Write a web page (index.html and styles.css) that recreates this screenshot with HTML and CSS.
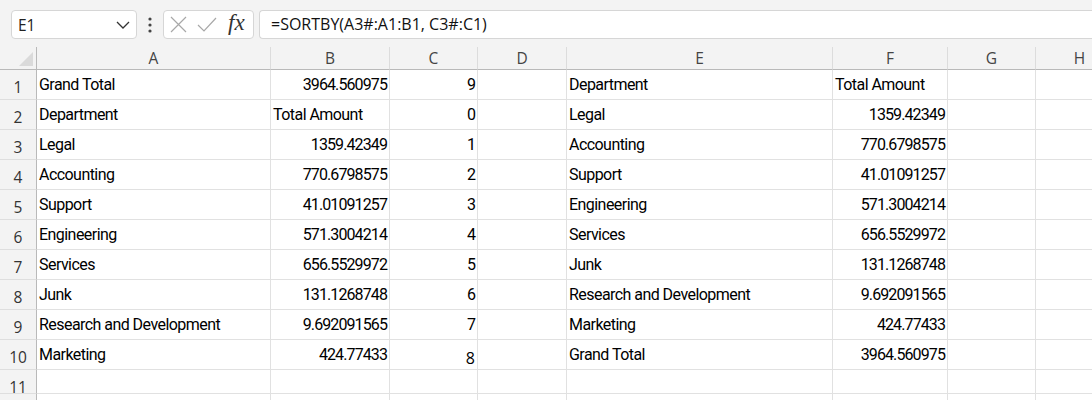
FILE: index.html
```html
<!DOCTYPE html>
<html lang="en">
<head>
<meta charset="UTF-8">
<meta name="viewport" content="width=device-width, initial-scale=1.0">
<title>Sheet1</title>
<link rel="stylesheet" href="styles.css">
</head>
<body>
<div class="toolbar">
    <div class="name-box">
        <span>E1</span>
        <svg class="chevron" width="14" height="8" viewBox="0 0 14 8"><path d="M1 1 L7 7 L13 1" fill="none" stroke="#333" stroke-width="1.3"/></svg>
    </div>
    <svg class="grip" width="4" height="16" viewBox="0 0 4 16">
        <circle cx="2" cy="2" r="1.6" fill="#444"/>
        <circle cx="2" cy="8" r="1.6" fill="#444"/>
        <circle cx="2" cy="14" r="1.6" fill="#444"/>
    </svg>
    <div class="fx-box">
        <svg class="cancel" width="17" height="17" viewBox="0 0 17 17"><path d="M1 1 L16 16 M16 1 L1 16" stroke="#a8a8a8" stroke-width="1.2"/></svg>
        <svg class="enter" width="20" height="15" viewBox="0 0 20 15"><path d="M1 8 L7 14 L19 1" fill="none" stroke="#a8a8a8" stroke-width="1.2"/></svg>
        <span class="fx">fx</span>
    </div>
    <div class="formula-box">=SORTBY(A3#:A1:B1, C3#:C1)</div>
</div>

<div class="sheet">
    <div class="corner"><span class="select-all"></span></div>
    <div class="col-head">A</div>
    <div class="col-head">B</div>
    <div class="col-head">C</div>
    <div class="col-head">D</div>
    <div class="col-head">E</div>
    <div class="col-head">F</div>
    <div class="col-head">G</div>
    <div class="col-head">H</div>

    <div class="row-head">1</div>
    <div class="cell">Grand Total</div>
    <div class="cell num">3964.560975</div>
    <div class="cell num">9</div>
    <div class="cell"></div>
    <div class="cell">Department</div>
    <div class="cell">Total Amount</div>
    <div class="cell"></div>
    <div class="cell"></div>

    <div class="row-head">2</div>
    <div class="cell">Department</div>
    <div class="cell">Total Amount</div>
    <div class="cell num">0</div>
    <div class="cell"></div>
    <div class="cell">Legal</div>
    <div class="cell num">1359.42349</div>
    <div class="cell"></div>
    <div class="cell"></div>

    <div class="row-head">3</div>
    <div class="cell">Legal</div>
    <div class="cell num">1359.42349</div>
    <div class="cell num">1</div>
    <div class="cell"></div>
    <div class="cell">Accounting</div>
    <div class="cell num">770.6798575</div>
    <div class="cell"></div>
    <div class="cell"></div>

    <div class="row-head">4</div>
    <div class="cell">Accounting</div>
    <div class="cell num">770.6798575</div>
    <div class="cell num">2</div>
    <div class="cell"></div>
    <div class="cell">Support</div>
    <div class="cell num">41.01091257</div>
    <div class="cell"></div>
    <div class="cell"></div>

    <div class="row-head">5</div>
    <div class="cell">Support</div>
    <div class="cell num">41.01091257</div>
    <div class="cell num">3</div>
    <div class="cell"></div>
    <div class="cell">Engineering</div>
    <div class="cell num">571.3004214</div>
    <div class="cell"></div>
    <div class="cell"></div>

    <div class="row-head">6</div>
    <div class="cell">Engineering</div>
    <div class="cell num">571.3004214</div>
    <div class="cell num">4</div>
    <div class="cell"></div>
    <div class="cell">Services</div>
    <div class="cell num">656.5529972</div>
    <div class="cell"></div>
    <div class="cell"></div>

    <div class="row-head">7</div>
    <div class="cell">Services</div>
    <div class="cell num">656.5529972</div>
    <div class="cell num">5</div>
    <div class="cell"></div>
    <div class="cell">Junk</div>
    <div class="cell num">131.1268748</div>
    <div class="cell"></div>
    <div class="cell"></div>

    <div class="row-head">8</div>
    <div class="cell">Junk</div>
    <div class="cell num">131.1268748</div>
    <div class="cell num">6</div>
    <div class="cell"></div>
    <div class="cell">Research and Development</div>
    <div class="cell num">9.692091565</div>
    <div class="cell"></div>
    <div class="cell"></div>

    <div class="row-head">9</div>
    <div class="cell">Research and Development</div>
    <div class="cell num">9.692091565</div>
    <div class="cell num">7</div>
    <div class="cell"></div>
    <div class="cell">Marketing</div>
    <div class="cell num">424.77433</div>
    <div class="cell"></div>
    <div class="cell"></div>

    <div class="row-head">10</div>
    <div class="cell">Marketing</div>
    <div class="cell num">424.77433</div>
    <div class="cell num odd-font">8</div>
    <div class="cell"></div>
    <div class="cell">Grand Total</div>
    <div class="cell num">3964.560975</div>
    <div class="cell"></div>
    <div class="cell"></div>

    <div class="row-head">11</div>
    <div class="cell"></div>
    <div class="cell"></div>
    <div class="cell"></div>
    <div class="cell"></div>
    <div class="cell"></div>
    <div class="cell"></div>
    <div class="cell"></div>
    <div class="cell"></div>

    <div class="row-head">12</div>
    <div class="cell"></div>
    <div class="cell"></div>
    <div class="cell"></div>
    <div class="cell"></div>
    <div class="cell"></div>
    <div class="cell"></div>
    <div class="cell"></div>
    <div class="cell"></div>
</div>
</body>
</html>
```

FILE: styles.css
```css
* {
    box-sizing: border-box;
}
body {
    margin: 0;
    width: 1092px;
    height: 400px;
    overflow: hidden;
    background-color: #fff;
    font-family: "Open Sans", "Noto Sans", sans-serif;
}

/* formula bar */
.toolbar {
    display: flex;
    align-items: flex-start;
    height: 47px;
    padding: 10px 0 0 11px;
    background-color: #f3f3f3;
    white-space: nowrap;
}
.name-box {
    display: flex;
    align-items: center;
    justify-content: space-between;
    width: 126px;
    height: 29px;
    padding: 0 6px 0 6px;
    background-color: #fff;
    border: 1px solid #d6d6d6;
    border-radius: 4px;
    font-size: 15.5px;
    color: #222;
}
.grip {
    margin: 7px 11px 0 11px;
}
.fx-box {
    display: flex;
    align-items: center;
    width: 91px;
    height: 29px;
    padding: 0 0 0 6px;
    background-color: #fff;
    border: 1px solid #d6d6d6;
    border-radius: 4px;
}
.fx-box .cancel {
    margin-right: 10px;
}
.fx-box .enter {
    margin-right: 11px;
}
.fx {
    font-family: "Liberation Serif", serif;
    font-style: italic;
    font-size: 23px;
    color: #333;
    margin-top: -4px;
}
.formula-box {
    flex: 1;
    margin-left: 5px;
    height: 29px;
    padding: 0 0 0 11px;
    line-height: 27px;
    background-color: #fff;
    border: 1px solid #d6d6d6;
    border-right: none;
    border-radius: 4px 0 0 4px;
    font-size: 16px;
    color: #111;
}

/* grid */
.sheet {
    display: grid;
    grid-template-columns: 37px 234px 119px 88px 89px 266px 115px 88px 88px;
    grid-template-rows: 23px repeat(10, 30px) 24px 30px;
}
.corner,
.col-head,
.row-head {
    background-color: #f3f3f3;
    color: #444;
    font-size: 15.5px;
}
.corner {
    position: relative;
    border-right: 1px solid #b9b9b9;
    border-bottom: 1px solid #b9b9b9;
}
.select-all {
    position: absolute;
    right: 3px;
    bottom: 3px;
    width: 0;
    height: 0;
    border-left: 14px solid transparent;
    border-bottom: 14px solid #dadada;
}
.col-head {
    text-align: center;
    line-height: 22px;
    border-right: 1px solid #dcdcdc;
    border-bottom: 1px solid #b9b9b9;
}
.row-head {
    text-align: center;
    padding-top: 5px;
    line-height: 24px;
    color: #333;
    border-right: 1px solid #b9b9b9;
    border-bottom: 1px solid #dedede;
}
.cell {
    padding: 0 2px 0 2px;
    line-height: 29px;
    font-family: Roboto, "Liberation Sans", sans-serif;
    font-size: 16px;
    letter-spacing: -0.55px;
    color: #000;
    white-space: nowrap;
    overflow: hidden;
    border-right: 1px solid #e1e1e1;
    border-bottom: 1px solid #e1e1e1;
}
.num {
    text-align: right;
    letter-spacing: -0.9px;
}
.odd-font {
    font-family: "Open Sans", "Noto Sans", sans-serif;
    font-size: 16px;
    letter-spacing: 0;
    padding-top: 4px;
}
```
